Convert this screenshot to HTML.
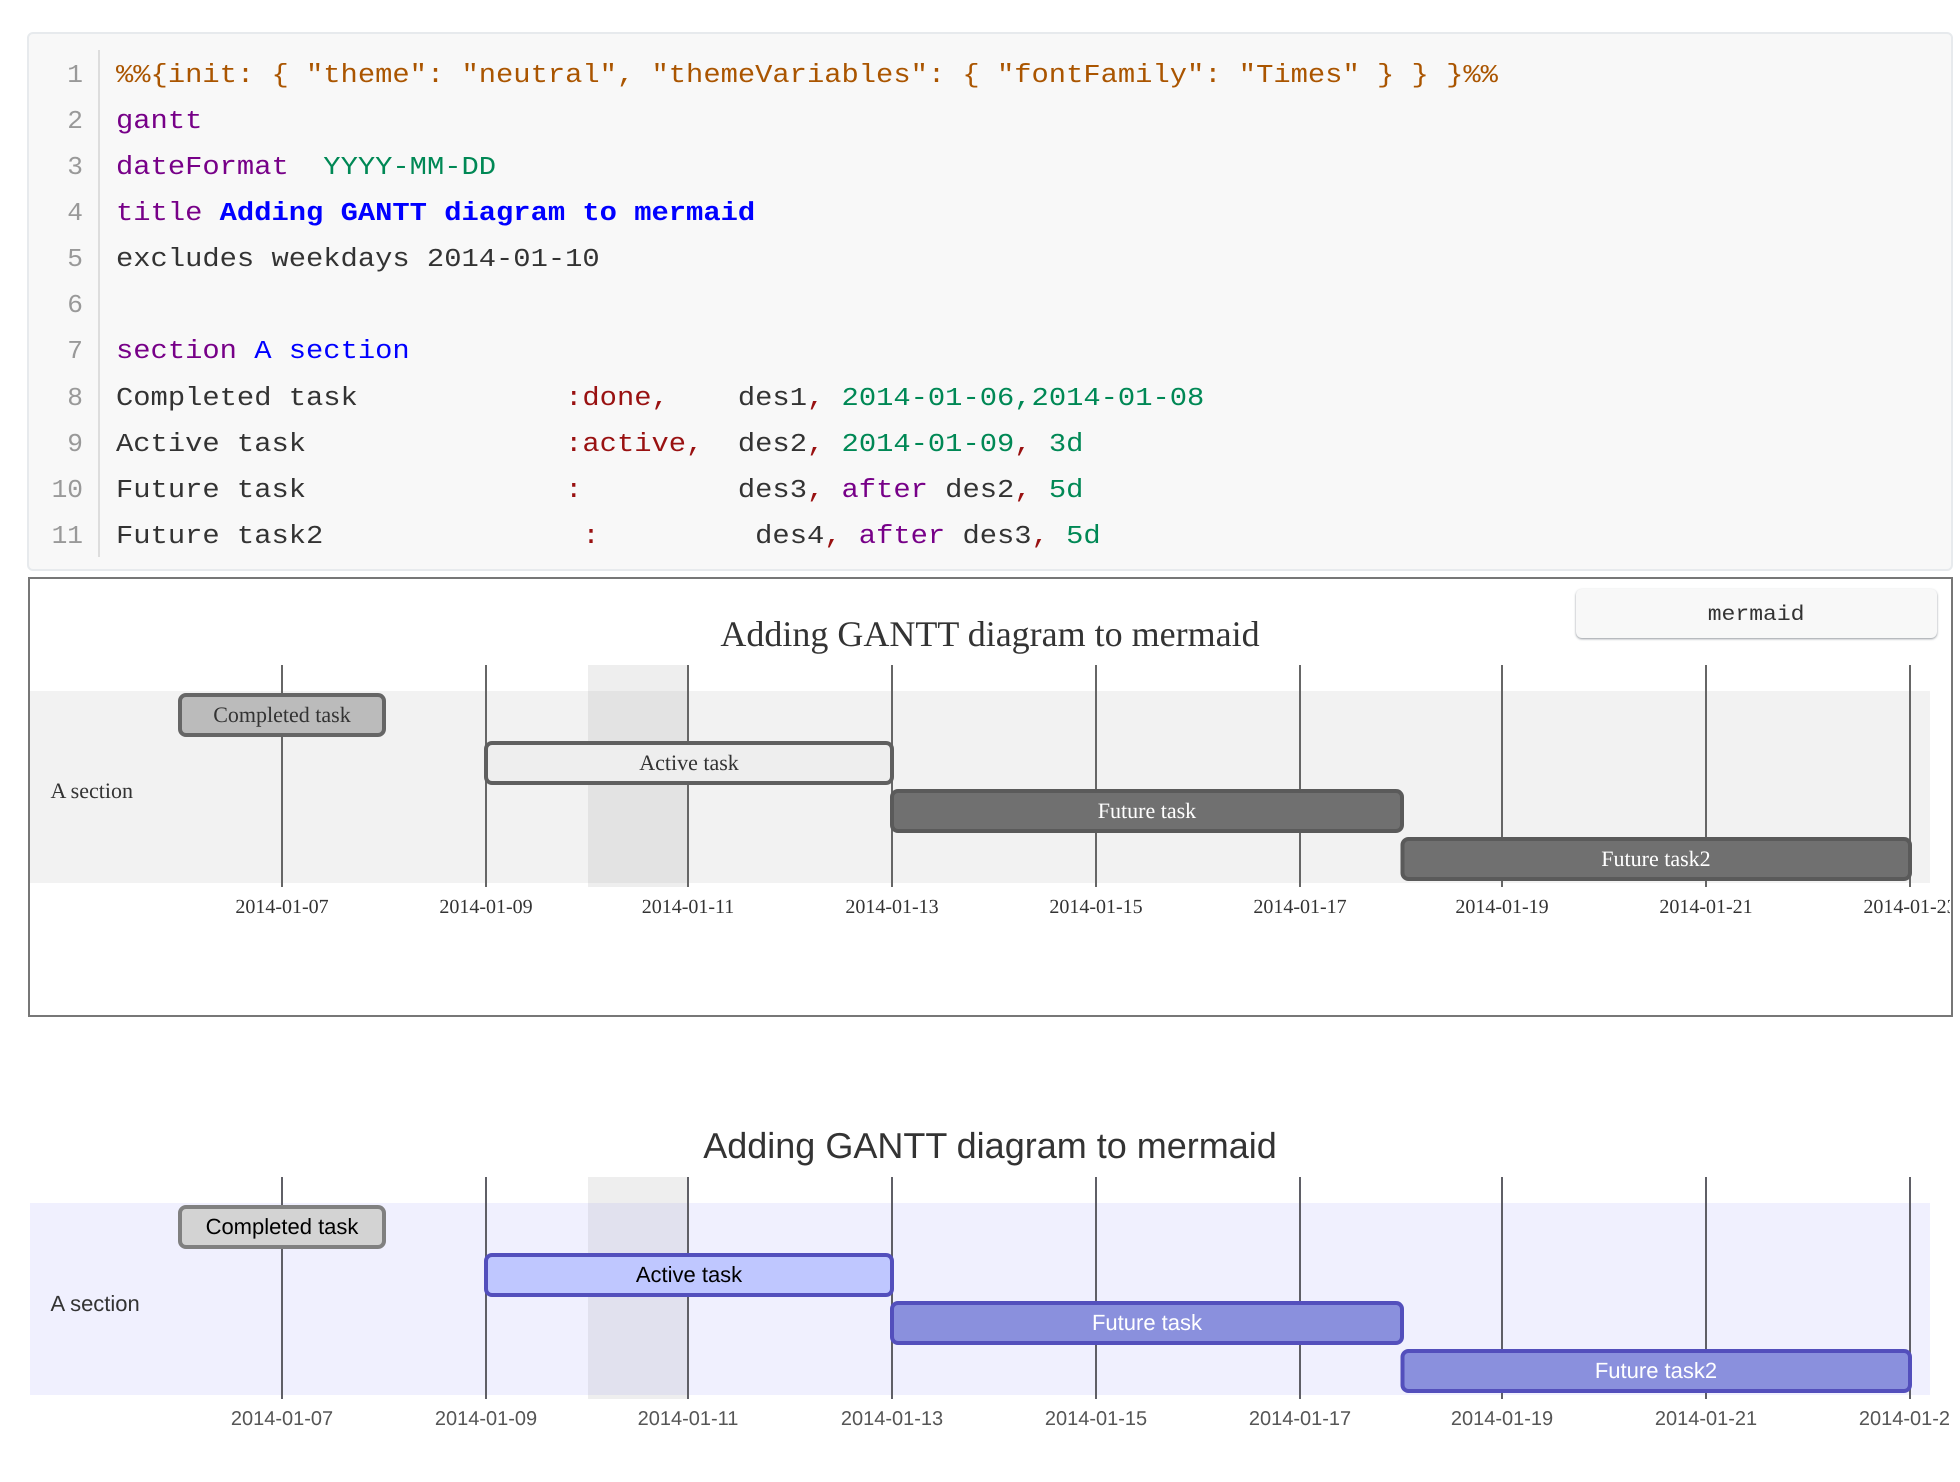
<!DOCTYPE html>
<html><head><meta charset="utf-8"><style>
html,body{margin:0;padding:0;background:#fff;width:1960px;height:1482px;overflow:hidden}
body{position:relative}
.abs{position:absolute;box-sizing:border-box}
#code{left:27px;top:32px;width:1926px;height:539px;background:#f8f8f8;border:2px solid #e7eaed;border-radius:6px}
#gline{left:98px;top:50px;width:2px;height:507px;background:#ddd}
.mono{font-family:"Liberation Mono",monospace;font-size:26.2px;line-height:46.08px;white-space:pre}
#nums{left:29px;top:52px;width:54px;text-align:right;color:#999}
#src{left:116px;top:52px;color:#333;transform:scaleX(1.0992);transform-origin:0 0}
.c{color:#a50}.k{color:#708}.n{color:#085}.h{color:#00f;font-weight:bold}.b{color:#00f}.r{color:#911}
#frame{left:28px;top:577px;width:1925px;height:440px;border:2px solid #777}
#btn{left:1576px;top:589px;width:361px;height:49px;background:#f8f8f8;border-radius:6px;box-shadow:0 1px 2px 0 rgba(60,70,80,.55);font-family:"Liberation Mono",monospace;font-size:21px;line-height:54px;text-align:center;color:#333;z-index:3;overflow:hidden}
#btn span{display:inline-block;transform:scaleX(1.0971)}
svg{position:absolute;left:0;top:0;text-rendering:geometricPrecision}
.s1 text{font-family:"Liberation Serif",serif}
.s2 text{font-family:"Liberation Sans",sans-serif}
</style></head><body>
<div class="abs" id="code"></div>
<div class="abs" id="gline"></div>
<div class="abs mono" id="nums">1
2
3
4
5
6
7
8
9
10
11</div>
<div class="abs mono" id="src"><span class="c">%%{init: { "theme": "neutral", "themeVariables": { "fontFamily": "Times" } } }%%</span>
<span class="k">gantt</span>
<span class="k">dateFormat</span>  <span class="n">YYYY-MM-DD</span>
<span class="k">title</span> <span class="h">Adding GANTT diagram to mermaid</span>
excludes weekdays 2014-01-10

<span class="k">section</span> <span class="b">A section</span>
Completed task            <span class="r">:done,</span>    des1<span class="r">,</span> <span class="n">2014-01-06,2014-01-08</span>
Active task               <span class="r">:active,</span>  des2<span class="r">,</span> <span class="n">2014-01-09</span><span class="r">,</span> <span class="n">3d</span>
Future task               <span class="r">:</span>         des3<span class="r">,</span> <span class="k">after</span> des2<span class="r">,</span> <span class="n">5d</span>
Future task2               <span class="r">:</span>         des4<span class="r">,</span> <span class="k">after</span> des3<span class="r">,</span> <span class="n">5d</span></div>
<div class="abs" id="frame"></div>
<div class="abs" id="btn"><span>mermaid</span></div>

<svg width="1960" height="1482" viewBox="0 0 1960 1482" xmlns="http://www.w3.org/2000/svg">
<defs><clipPath id="cp"><rect x="0" y="0" width="1950" height="1482"/></clipPath></defs>
<g clip-path="url(#cp)">
<!-- Gantt 1 -->
<g class="s1">
<text x="990" y="646" font-size="36" text-anchor="middle" fill="#333">Adding GANTT diagram to mermaid</text>
<rect x="30" y="691" width="1900" height="192" fill="#f2f2f2"/>
<rect x="588" y="665" width="100" height="222" fill="#eeeeee"/>
<rect x="588" y="691" width="100" height="192" fill="#e3e3e3"/>
<g stroke="#666" stroke-width="2">
<path d="M282 665V887M486 665V887M688 665V887M892 665V887M1096 665V887M1300 665V887M1502 665V887M1706 665V887M1910 665V887"/>
</g>
<g font-size="20" fill="#333" text-anchor="middle">
<text x="282" y="913">2014-01-07</text><text x="486" y="913">2014-01-09</text><text x="688" y="913">2014-01-11</text><text x="892" y="913">2014-01-13</text><text x="1096" y="913">2014-01-15</text><text x="1300" y="913">2014-01-17</text><text x="1502" y="913">2014-01-19</text><text x="1706" y="913">2014-01-21</text><text x="1910" y="913">2014-01-23</text>
</g>
<rect x="180" y="695" width="204" height="40" rx="6" fill="#bbbbbb" stroke="#666" stroke-width="4"/>
<rect x="486" y="743" width="406" height="40" rx="6" fill="#eeeeee" stroke="#5f5f5f" stroke-width="4"/>
<rect x="892" y="791" width="510" height="40" rx="6" fill="#707070" stroke="#5a5a5a" stroke-width="4"/>
<rect x="1402.500" y="839" width="507.500" height="40" rx="6" fill="#707070" stroke="#5a5a5a" stroke-width="4"/>
<g font-size="22" text-anchor="middle">
<text x="282" y="722" fill="#333">Completed task</text>
<text x="689" y="770" fill="#333">Active task</text>
<text x="1147" y="818" fill="#fff">Future task</text>
<text x="1656" y="866" fill="#fff">Future task2</text>
</g>
<text x="50.500" y="798" font-size="22" fill="#333">A section</text>
</g>
<!-- Gantt 2 -->
<g class="s2">
<text x="990" y="1158" font-size="36" text-anchor="middle" fill="#333">Adding GANTT diagram to mermaid</text>
<rect x="30" y="1203" width="1900" height="192" fill="#f0f0fe"/>
<rect x="588" y="1177" width="100" height="222" fill="#eeeeee"/>
<rect x="588" y="1203" width="100" height="192" fill="#e1e1ee"/>
<g stroke="#5f5f66" stroke-width="2">
<path d="M282 1177V1399M486 1177V1399M688 1177V1399M892 1177V1399M1096 1177V1399M1300 1177V1399M1502 1177V1399M1706 1177V1399M1910 1177V1399"/>
</g>
<g font-size="20" fill="#555" text-anchor="middle">
<text x="282" y="1425">2014-01-07</text><text x="486" y="1425">2014-01-09</text><text x="688" y="1425">2014-01-11</text><text x="892" y="1425">2014-01-13</text><text x="1096" y="1425">2014-01-15</text><text x="1300" y="1425">2014-01-17</text><text x="1502" y="1425">2014-01-19</text><text x="1706" y="1425">2014-01-21</text><text x="1910" y="1425">2014-01-23</text>
</g>
<rect x="180" y="1207" width="204" height="40" rx="6" fill="#d3d3d3" stroke="#808080" stroke-width="4"/>
<rect x="486" y="1255" width="406" height="40" rx="6" fill="#bfc7ff" stroke="#534fbc" stroke-width="4"/>
<rect x="892" y="1303" width="510" height="40" rx="6" fill="#8a90dd" stroke="#534fbc" stroke-width="4"/>
<rect x="1402.500" y="1351" width="507.500" height="40" rx="6" fill="#8a90dd" stroke="#534fbc" stroke-width="4"/>
<g font-size="22" text-anchor="middle">
<text x="282" y="1234" fill="#000">Completed task</text>
<text x="689" y="1282" fill="#000">Active task</text>
<text x="1147" y="1330" fill="#fff">Future task</text>
<text x="1656" y="1378" fill="#fff">Future task2</text>
</g>
<text x="50.500" y="1311" font-size="22" fill="#333">A section</text>
</g>
</g>
</svg>
</body></html>
